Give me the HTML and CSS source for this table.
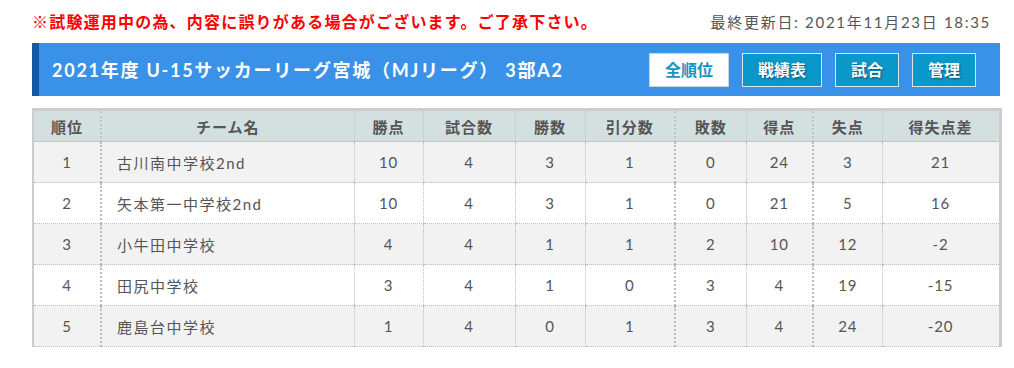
FILE: index.html
```html
<!DOCTYPE html>
<html lang="ja">
<head>
<meta charset="utf-8">
<title>順位表</title>
<link rel="stylesheet" href="styles.css">
</head>
<body>
<div class="page">
  <div class="topline">
    <p class="notice">※試験運用中の為、内容に誤りがある場合がございます。ご了承下さい。</p>
    <p class="updated">最終更新日: 2021年11月23日 18:35</p>
  </div>
  <div class="titlebar">
    <h1 class="title">2021年度 U-15サッカーリーグ宮城（MJリーグ） 3部A2</h1>
    <nav class="tabs">
      <a class="tab tab-active">全順位</a>
      <a class="tab">戦績表</a>
      <a class="tab">試合</a>
      <a class="tab">管理</a>
    </nav>
  </div>
  <table class="standings">
    <colgroup>
      <col class="c-rank"><col class="c-team"><col class="c-pts"><col class="c-games"><col class="c-win"><col class="c-draw"><col class="c-loss"><col class="c-gf"><col class="c-ga"><col class="c-gd">
    </colgroup>
    <thead>
      <tr><th>順位</th><th>チーム名</th><th>勝点</th><th>試合数</th><th>勝数</th><th>引分数</th><th>敗数</th><th>得点</th><th>失点</th><th>得失点差</th></tr>
    </thead>
    <tbody>
      <tr><td>1</td><td class="team">古川南中学校2nd</td><td>10</td><td>4</td><td>3</td><td>1</td><td>0</td><td>24</td><td>3</td><td>21</td></tr>
      <tr><td>2</td><td class="team">矢本第一中学校2nd</td><td>10</td><td>4</td><td>3</td><td>1</td><td>0</td><td>21</td><td>5</td><td>16</td></tr>
      <tr><td>3</td><td class="team">小牛田中学校</td><td>4</td><td>4</td><td>1</td><td>1</td><td>2</td><td>10</td><td>12</td><td>-2</td></tr>
      <tr><td>4</td><td class="team">田尻中学校</td><td>3</td><td>4</td><td>1</td><td>0</td><td>3</td><td>4</td><td>19</td><td>-15</td></tr>
      <tr><td>5</td><td class="team">鹿島台中学校</td><td>1</td><td>4</td><td>0</td><td>1</td><td>3</td><td>4</td><td>24</td><td>-20</td></tr>
    </tbody>
  </table>
</div>
</body>
</html>
```
FILE: styles.css
```css
* { box-sizing: border-box; }
html, body { margin: 0; padding: 0; background: #fff; }
body { font-family: Lato, "Noto Sans CJK JP", sans-serif; color: #555; }

.page { width: 968px; margin-left: 32px; }

.topline {
  display: flex;
  justify-content: space-between;
  align-items: center;
  height: 43px;
}
.notice {
  margin: 0;
  color: #ff0000;
  font-weight: bold;
  font-size: 16px;
  letter-spacing: 1.2px;
  line-height: 20px;
}
.updated {
  margin: 0 9px 0 0;
  font-size: 15px;
  letter-spacing: 1.7px;
  line-height: 20px;
  color: #555;
}

.titlebar {
  display: flex;
  align-items: center;
  justify-content: space-between;
  height: 53px;
  background: #3a91e8;
  border-left: 7px solid #1259a1;
  padding: 0 24px 0 13px;
}
.title {
  margin: 0;
  color: #fff;
  font-size: 18px;
  font-weight: bold;
  line-height: 24px;
  letter-spacing: 1.75px;
}
.tabs { display: flex; gap: 13px; }
.tab {
  display: block;
  height: 34px;
  line-height: 32px;
  padding: 0 15px;
  border: 1px solid #dfe6ea;
  background: #0a97c9;
  color: #fff;
  font-size: 16px;
  font-weight: bold;
  text-shadow: 1px 1px 2px rgba(0,0,0,0.45);
}
.tab-active {
  background: #fff;
  color: #1a90c6;
  border-color: #c8d4dc;
  text-shadow: none;
}

.standings {
  margin-top: 12px;
  width: 967px;
  border-collapse: collapse;
  table-layout: fixed;
  border-top: 3px solid #cccccc;
  border-left: 2px solid #cccccc;
  border-right: 3px solid #cccccc;
  font-size: 15px;
}
.c-rank { width: 68px; }
.c-team { width: 253px; }
.c-pts { width: 69px; }
.c-games { width: 92px; }
.c-win { width: 70px; }
.c-draw { width: 90px; }
.c-loss { width: 71px; }
.c-gf { width: 67px; }
.c-ga { width: 69px; }
.c-gd { width: 118px; }

.standings th {
  height: 32px;
  background: #d4e0df;
  color: #555;
  font-size: 15px;
  font-weight: bold;
  text-align: center;
  border-left: 1px dotted #bcc6c6;
  border-bottom: 1px solid #c4c4c4;
  padding: 0;
  letter-spacing: 1px;
}
.standings td {
  height: 41px;
  text-align: center;
  padding: 0;
  border-left: 1px dotted #bdbdbd;
  border-bottom: 1px dotted #bdbdbd;
  color: #555;
  letter-spacing: 0.8px;
}
.standings th:first-child, .standings td:first-child { border-left: none; }
.standings td:nth-child(2), .standings th:nth-child(2),
.standings td:nth-child(7), .standings th:nth-child(7),
.standings td:nth-child(9), .standings th:nth-child(9) { border-left-width: 2px; }
.standings tbody tr:nth-child(odd) td { background: #f2f2f2; }
.standings tbody tr:nth-child(even) td { background: #fff; }
.standings td.team { text-align: left; padding-left: 15px; letter-spacing: 1.5px; }
```
